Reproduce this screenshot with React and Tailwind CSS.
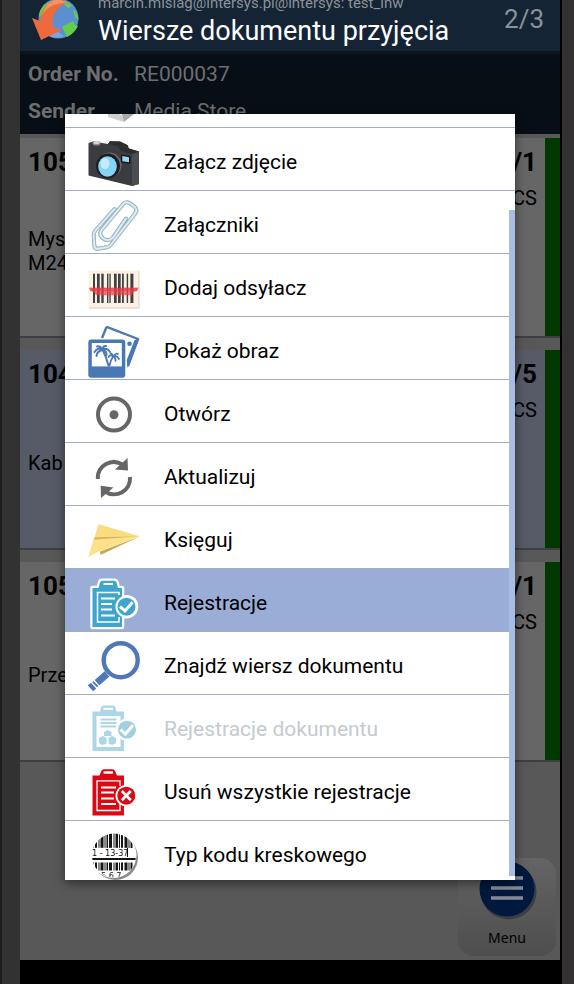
import { clsx } from "clsx";

const BLUE = "#4a78b5";

function BoxIcon() {
    return (
        <svg viewBox="0 0 52 52" className="h-[52px] w-[52px] shrink-0" aria-hidden="true">
            <path d="M20 36 L34 40 L36 47 L20 42 Z" fill="#cfcfd1" />
            <path d="M33 36 L46 36 L46 39 L36 47 Z" fill="#a9a9ab" />
        </svg>
    );
}

function CameraIcon() {
    return (
        <svg viewBox="0 0 52 52" className="h-[52px] w-[52px] shrink-0" aria-hidden="true">
            <path d="M0.5 6 L5 4.5 L20 7 L22 4.3 L32 4.5 L40 8.5 L41 12 L51 14.5 V47 L44 49 L0.5 38.5 Z" fill="#3b3c40" />
            <path d="M44 17 L51 14.5 V47 L44 49 Z" fill="#4c4d52" />
            <path d="M20 7 L30 9 L33 14 L44 17 L51 14.5 L40 11 L39.5 8 L32 4.5 L22 4.3 Z" fill="#2c2d30" />
            <ellipse cx="8.5" cy="6.3" rx="4" ry="2.3" fill="#8e9194" />
            <ellipse cx="8.5" cy="5.4" rx="3" ry="1.5" fill="#d4d7d9" />
            <ellipse cx="21.5" cy="28" rx="12" ry="12.5" fill="#68696c" />
            <ellipse cx="20" cy="29" rx="12" ry="12.5" fill="#1d1e20" />
            <ellipse cx="19.5" cy="29.5" rx="9.3" ry="10.2" fill="#86d3f3" />
            <ellipse cx="17" cy="26.5" rx="4.5" ry="5.5" fill="#c4eafb" />
            <path d="M33 17.5 L42.5 19 V27 L33 25.5 Z" fill="#17181a" />
            <path d="M34.3 19 L41 20.2 V25.2 L34.3 24.2 Z" fill="#8edbf7" />
        </svg>
    );
}

function PaperclipIcon() {
    const d = "M26.5 9 L7 31 Q5.5 33 5.8 36 L6.3 45.5 Q6.6 49 10 48.8 L19 47.2 Q21.5 46.6 23 44.6 L47.5 13 Q50 9 46 6.2 L41.5 3 Q38 1 35 4.2 L13.5 30 Q10.5 35 15 38.3 Q20.5 42.5 25 37.5 L38 18.5";
    return (
        <svg viewBox="0 0 52 52" className="h-[52px] w-[52px] shrink-0" fill="none" strokeLinecap="round" strokeLinejoin="round" aria-hidden="true">
            <path d={d} stroke="#8ba5b4" strokeWidth="4" />
            <path d={d} stroke="#b4cbd8" strokeWidth="3" />
            <path d={d} stroke="#e4eff5" strokeWidth="1.4" />
        </svg>
    );
}

function BarcodeIcon() {
    const bars = [[5, 2], [9, 2.7], [13.3, 2.4], [19, 1.4], [21.4, 1.3], [26, 2.7], [30, 2.7], [34, 1.8], [38.7, 1.4], [42.4, 3]];
    return (
        <svg viewBox="0 0 52 52" className="h-[52px] w-[52px] shrink-0" aria-hidden="true">
            <rect x="1" y="8" width="50.5" height="37.5" fill="#d8cdbd" />
            <rect x="0.5" y="7.5" width="50" height="37" fill="#fbf1e4" />
            {bars.map(([x, w]) => (
                <rect key={x} x={x} y="10.7" width={w} height="29.3" fill="#414042" />
            ))}
            <path d="M1 24.7 H50.4 L49 28 L45 29 L44 32.3 H8 L6.5 29.5 L2.5 28 Z" fill="#ee3f46" fillOpacity="0.72" />
            <path d="M1 24.7 H50.4 L49 28 H2.5 Z" fill="#e0383e" fillOpacity="0.45" />
        </svg>
    );
}

function PhotosIcon() {
    return (
        <svg viewBox="0 0 52 52" className="h-[52px] w-[52px] shrink-0" aria-hidden="true">
            <path d="M14 12 L18 2.2 Q18.6 0.7 20 1.3 L50 13 L40 40" fill="none" stroke={BLUE} strokeWidth="2.4" strokeLinejoin="round" />
            <path d="M46.5 14 L51 13 L40.5 40 L39.5 42 L38.8 34 Z" fill={BLUE} />
            <circle cx="41.5" cy="17.7" r="2.3" fill={BLUE} />
            <rect x="0.3" y="13.6" width="37" height="38.2" rx="3" fill={BLUE} />
            <rect x="3.8" y="17" width="30" height="23.4" fill="#fff" />
            <g fill="none" stroke={BLUE} strokeLinecap="round">
                <path d="M14.5 23.5 Q18 30 20.5 39.5" strokeWidth="2" />
                <path d="M25.5 30 Q22.5 34 21.5 39.5" strokeWidth="1.8" />
                <path d="M14.5 24 Q10 20.5 6.5 26 M14.5 24 Q9 25 8.5 30 M14.5 24 Q12 19.5 9 20.5 M14.5 24 Q15 19.5 18 20 M14.5 24 Q19 21 22 26 M14.5 24 Q19 25 18.5 29" strokeWidth="2" />
                <path d="M25.5 30.5 Q22.5 28 20.5 31 M25.5 30.5 Q23.5 26.5 22.5 27.5 M25.5 30.5 Q28 26.5 30 28 M25.5 30.5 Q29 29 31 33 M25.5 30.5 Q28 32 27.5 35" strokeWidth="1.7" />
            </g>
        </svg>
    );
}

function TargetIcon() {
    return (
        <svg viewBox="0 0 52 52" className="h-[52px] w-[52px] shrink-0" aria-hidden="true">
            <circle cx="26" cy="25.5" r="16" fill="none" stroke="#666" strokeWidth="4" />
            <circle cx="26" cy="25.8" r="4.5" fill="#666" />
        </svg>
    );
}

function RefreshIcon() {
    return (
        <svg viewBox="0 0 52 52" className="h-[52px] w-[52px] shrink-0" aria-hidden="true">
            <path d="M9.8 27 A16 16 0 0 1 35 13" fill="none" stroke="#666" strokeWidth="4" />
            <path d="M42 25 A16 16 0 0 1 17 39.5" fill="none" stroke="#666" strokeWidth="4" />
            <path d="M39.5 6 L40 18.5 L27 17.5 Z" fill="#666" />
            <path d="M12.7 33.8 L13 46 L25.5 35.5 Z" fill="#666" />
        </svg>
    );
}

function PaperPlaneIcon() {
    return (
        <svg viewBox="0 0 52 52" className="h-[52px] w-[52px] shrink-0" aria-hidden="true">
            <path d="M12 36.5 L12.5 40 L52 21.3 Z" fill="#c9a95a" />
            <path d="M10.5 9.3 L52 21.3 L6 24 Z" fill="#fbdc7d" />
            <path d="M6 22.5 L52 21.3 L10 36.8 L0.3 42 Z" fill="#fde28b" />
            <path d="M6.5 22.2 L52 21.3 L6 24.8 Z" fill="#d6b765" />
        </svg>
    );
}

function RegistrationsIcon() {
    return (
        <svg viewBox="0 0 52 52" className="h-[52px] w-[52px] shrink-0" aria-hidden="true">
            <path d="M4.5 10 H10.5 L12 4.5 Q12.5 2.8 14.5 2.8 H26 Q28 2.8 28.5 4.5 L30 10 H34 V49 H4.5 Z" fill="#fff" stroke="#fff" strokeWidth="4.5" strokeLinejoin="round" />
            <circle cx="38.5" cy="28.7" r="11.8" fill="#fff" />
            <path d="M4.5 10 H10.5 L12 4.5 Q12.5 2.8 14.5 2.8 H26 Q28 2.8 28.5 4.5 L30 10 H34 V49 H4.5 Z" fill="#3ea6cd" />
            <rect x="15.5" y="5" width="9.5" height="2" fill="#fff" />
            <path d="M31 17 V14.5 H9.5 V44 H31 V39" fill="none" stroke="#fff" strokeWidth="1.5" />
            <path d="M13 20.5 H27 M13 26 H24 M13 31.5 H24 M13 37.5 H27" stroke="#fff" strokeWidth="1.8" />
            <circle cx="38.5" cy="28.7" r="11" fill="#fff" />
            <circle cx="38.5" cy="28.7" r="9" fill="#3ea6cd" />
            <path d="M32 28.7 L37 32.9 L44.5 24.2" fill="none" stroke="#fff" strokeWidth="3" />
        </svg>
    );
}

function MagnifierIcon() {
    return (
        <svg viewBox="0 0 52 52" className="h-[52px] w-[52px] shrink-0" fill="none" stroke="#5078b8" aria-hidden="true">
            <circle cx="32.7" cy="19.2" r="17" strokeWidth="4.4" />
            <path d="M19 33 L9 41.7" strokeWidth="7" />
            <path d="M8 42.5 L6.6 43.8" strokeWidth="7" />
            <path d="M5.6 44.6 L2.5 47.4" strokeWidth="8" />
        </svg>
    );
}

function DocumentRegistrationsIcon() {
    return (
        <svg viewBox="0 0 52 52" className="h-[52px] w-[52px] shrink-0" aria-hidden="true">
            <path d="M4.5 7.5 H12 L13 3.5 Q13.5 1.5 15.5 1.5 H25 Q27 1.5 27.5 3.5 L28.5 7.5 H36 V47 H4.5 Z" fill="#acd7e8" />
            <rect x="15.5" y="3.8" width="9.5" height="2" fill="#fff" />
            <rect x="8.5" y="12" width="24" height="31" fill="#fff" />
            <path d="M12.5 15.5 H28.5 M12.5 19 H28.5 M12.5 22.5 H28.5" stroke="#acd7e8" strokeWidth="1.8" />
            <path d="M16 28 L19.5 26 L23.5 28 V32 H16 Z M11 34 L15 32 L18.5 34 V40 L14 41 L11 39 Z M20.5 34 L24 32 L28 34 V39 L24 41 L20.5 39.5 Z" fill="#acd7e8" />
            <circle cx="39" cy="25.7" r="11" fill="#fff" />
            <circle cx="39" cy="25.7" r="9" fill="#a0cfe2" />
            <path d="M32.5 25.5 L37.3 30 L45 21.3" fill="none" stroke="#fff" strokeWidth="3" />
        </svg>
    );
}

function DeleteRegistrationsIcon() {
    return (
        <svg viewBox="0 0 52 52" className="h-[52px] w-[52px] shrink-0" aria-hidden="true">
            <path d="M4.5 8.5 H11.5 L13.3 4 Q14 2.2 16 2.2 H24.5 Q26.3 2.2 27 4 L29 8.5 H36 V48.5 H4.5 Z" fill="#dc0812" />
            <rect x="15.5" y="4.3" width="9.5" height="2.4" fill="#fff" />
            <path d="M32 19 V13.8 H9 V43.5 H32 V37" fill="none" stroke="#fff" strokeWidth="1.3" />
            <path d="M13 20.5 H28 M13 25.5 H26 M13 31.5 H26 M13 37 H28" stroke="#fff" strokeWidth="1.8" />
            <circle cx="38.3" cy="28.7" r="10.8" fill="#fff" />
            <circle cx="38.3" cy="28.7" r="9" fill="#dc0812" />
            <path d="M33.8 24 L42.8 33.2 M42.8 24 L33.8 33.2" stroke="#fff" strokeWidth="2.8" />
        </svg>
    );
}

function BarcodeTypeIcon() {
    const bars = [[5, 1], [7, 2], [10.5, 1], [12.5, 3], [16.5, 1], [18.5, 1.5], [21, 3], [25.5, 1], [27.5, 2.5], [31, 1], [33, 2], [36.5, 3], [40.5, 1], [42.5, 2]];
    return (
        <svg viewBox="0 0 52 52" className="h-[52px] w-[52px] shrink-0" aria-hidden="true">
            <defs>
                <clipPath id="lens">
                    <circle cx="26" cy="25.5" r="22" />
                </clipPath>
            </defs>
            <circle cx="27.5" cy="27.5" r="22.5" fill="#8b8b8b" />
            <circle cx="25.5" cy="25" r="23" fill="#fff" />
            <g clipPath="url(#lens)" fill="#151515">
                {bars.map(([x, w]) => (
                    <g key={x}>
                        <rect x={x} y="3" width={w} height="15" />
                        <rect x={x} y="32.5" width={w} height="8" />
                    </g>
                ))}
                <rect x="4" y="28" width="44" height="2" />
                <text x="13" y="49" fontSize="8" fontFamily="DejaVu Sans">5 6 7</text>
            </g>
            <rect x="3" y="17.8" width="36" height="10" fill="#fff" />
            <text x="4" y="26" fontSize="8" fontFamily="DejaVu Sans" fill="#111">1 - 13-37</text>
            <rect x="39" y="18" width="1" height="9" fill="#111" />
        </svg>
    );
}

function GlobeLogo() {
    return (
        <svg viewBox="0 0 50 44" className="h-[44px] w-[50px] shrink-0" aria-hidden="true">
            <circle cx="27.5" cy="19.5" r="20" fill="#5b8fd0" />
            <path d="M9 12 Q13 4 21 2 L20 9 L13 17 L8 18 Z M33 2 Q38 3 41 7 L37 9 L33 5 Z M42 10 Q47 14 47.5 21 L44 18 Z M31 28 L38 24 L42 22 L44 26 L47 27 Q44 34 36 38 L33 32 Z" fill="#63cc4b" />
            <path d="M14 33 Q20 34 24 31 L33 37 Q24 41 16 36 Z" fill="#7da6dc" />
            <path d="M36 4 Q26 -3 18 4 Q10 10 9 22 L1 19 L10 41 L31 31 L22 28 Q19 11 36 4 Z" fill="#ed6a3c" />
            <path d="M36 4 Q26 -3 18 4 Q13 9 11 16 Q18 4 36 4 Z" fill="#f5925f" />
        </svg>
    );
}

const menuItems = [
    { title: "Załącz zdjęcie", icon: CameraIcon },
    { title: "Załączniki", icon: PaperclipIcon },
    { title: "Dodaj odsyłacz", icon: BarcodeIcon },
    { title: "Pokaż obraz", icon: PhotosIcon },
    { title: "Otwórz", icon: TargetIcon },
    { title: "Aktualizuj", icon: RefreshIcon },
    { title: "Księguj", icon: PaperPlaneIcon },
    { title: "Rejestracje", icon: RegistrationsIcon, active: true },
    { title: "Znajdź wiersz dokumentu", icon: MagnifierIcon },
    { title: "Rejestracje dokumentu", icon: DocumentRegistrationsIcon, disabled: true },
    { title: "Usuń wszystkie rejestracje", icon: DeleteRegistrationsIcon },
    { title: "Typ kodu kreskowego", icon: BarcodeTypeIcon },
];

const lines = [
    { no: "105", lines: ["Mys", "M24"], qty: "/1" },
    { no: "104", lines: ["Kab"], qty: "/5", selected: true },
    { no: "105", lines: ["Prze"], qty: "/1" },
];

function LineCard({ item }) {
    return (
        <li className={clsx("flex h-[200px] border-b-2 border-[#3f3f3f]", item.selected ? "bg-[#565b67]" : "bg-[#666]")}>
            <div className="flex flex-1 flex-col pl-2">
                <span className="pt-2 text-[26px] leading-8 font-bold">{item.no}</span>
                <div className="flex flex-1 flex-col justify-center pb-3 text-xl leading-6">
                    {item.lines.map((text) => (
                        <span key={text}>{text}</span>
                    ))}
                </div>
            </div>
            <div className="flex flex-col items-end pr-2">
                <span className="pt-2 text-[26px] leading-8 font-bold">{item.qty}</span>
                <span className="pt-2 text-xl leading-6">PCS</span>
            </div>
            <div className="w-[15px] bg-[#003800]" />
        </li>
    );
}

function ActionMenu() {
    return (
        <div role="menu" className="absolute inset-x-[45px] top-[114px] h-[766px] overflow-hidden bg-white shadow-[0_3px_10px_rgba(0,0,0,0.5)]">
            <div className="flex h-[14px] items-end overflow-hidden border-b border-[#a3acc0] pl-[23px]">
                <BoxIcon />
            </div>
            {menuItems.map((item) => (
                <button
                    key={item.title}
                    type="button"
                    role="menuitem"
                    disabled={item.disabled}
                    className={clsx(
                        "flex h-[63px] w-full items-center gap-6 border-b border-[#a3acc0] pt-[9px] pb-px pl-[23px] text-left text-[21px]",
                        item.active && "bg-[#9aadd6]",
                        item.disabled ? "text-[#c5cacf]" : "text-black"
                    )}
                >
                    <item.icon />
                    {item.title}
                </button>
            ))}
            {/* Scrollbar thumb */}
            <div className="absolute right-0 top-24 bottom-1 w-1.5 bg-[#a9bce2]" />
        </div>
    );
}

export default function App() {
    return (
        <div className="flex min-h-screen w-full bg-[#302f2f] font-['Roboto',sans-serif] text-black">
            <div className="w-5 border-l-2 border-[#1d1d1d] bg-[#333232]" />
            <main className="relative flex min-w-0 flex-1 flex-col bg-[#585858]">
                <header className="flex h-[54px] items-end overflow-hidden border-b-3 border-[#0c141d] bg-[#152434]">
                    <div className="pb-2 pl-[11px]">
                        <GlobeLogo />
                    </div>
                    <div className="flex min-w-0 flex-1 flex-col pb-1 pl-[17px]">
                        <span className="text-[15px] leading-6 whitespace-nowrap text-[#8a929a]">marcin.mislag@intersys.pl@intersys: test_inw</span>
                        <h1 className="text-[27px] leading-8 whitespace-nowrap text-white">Wiersze dokumentu przyjęcia</h1>
                    </div>
                    <span className="pr-4 pb-4 text-[26px] leading-8 text-[#8a929a]">2/3</span>
                </header>

                <dl className="grid h-20 grid-cols-[98px_1fr] content-start gap-x-2 gap-y-[13px] bg-[#080e16] pt-2 pl-2 text-[21px] leading-6 text-[#6c6e70]">
                    <dt className="font-bold">Order No.</dt>
                    <dd>RE000037</dd>
                    <dt className="font-bold">Sender</dt>
                    <dd>Media Store</dd>
                </dl>

                <ul className="flex flex-col gap-3 pt-1">
                    {lines.map((item, index) => (
                        <LineCard key={index} item={item} />
                    ))}
                </ul>

                <div className="flex flex-1 items-end justify-end p-1">
                    <button type="button" className="flex h-[98px] w-[98px] flex-col items-center rounded-2xl bg-linear-to-b from-[#646464] to-[#4e4e4e] pt-1 text-sm text-black">
                        <svg viewBox="0 0 60 60" className="h-[60px] w-[60px]" aria-hidden="true">
                            <circle cx="31.5" cy="29.5" r="28" fill="#3a3d45" />
                            <circle cx="30" cy="27" r="27.5" fill="#00193d" />
                            <path d="M14 16 H46 M14 26 H46 M14 36 H46" stroke="#858b96" strokeWidth="3.4" />
                        </svg>
                        <span className="pt-1.5 font-['Noto_Sans',sans-serif] leading-5">Menu</span>
                    </button>
                </div>
                <div className="h-6 bg-black" />

                <ActionMenu />
            </main>
            <div className="w-[14px] border-l-2 border-black bg-[#333131]" />
        </div>
    );
}
